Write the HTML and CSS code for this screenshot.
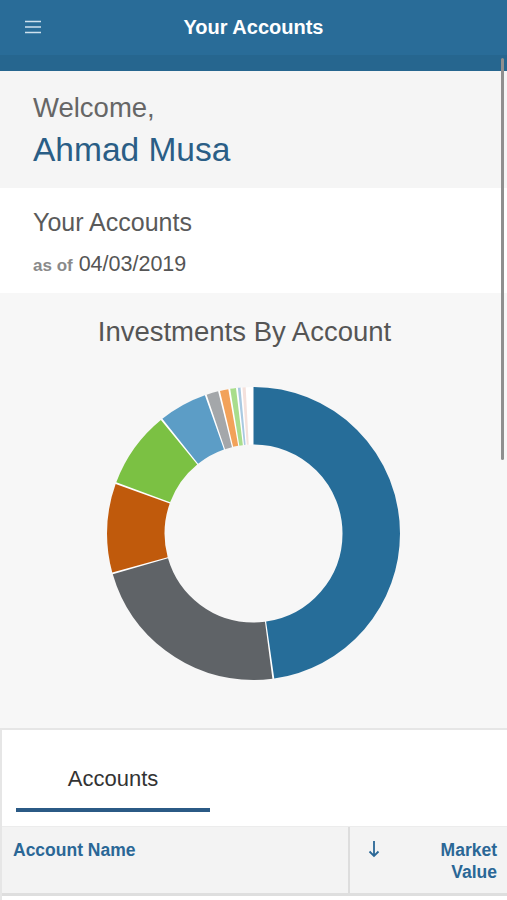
FILE: index.html
```html
<!DOCTYPE html>
<html lang="en">
<head>
    <meta charset="UTF-8">
    <meta name="viewport" content="width=device-width, initial-scale=1.0">
    <title>Your Accounts</title>
    <link rel="stylesheet" href="styles.css">
</head>
<body>
    <header class="topbar">
        <button class="menu-btn" aria-label="Menu">
            <svg width="18" height="16" viewBox="0 0 18 16">
                <path d="M1 2.5h16M1 8h16M1 13.5h16" stroke="#cfe1ee" stroke-width="1.6" fill="none"/>
            </svg>
        </button>
        <h1 class="topbar-title">Your Accounts</h1>
    </header>
    <div class="subbar"></div>

    <section class="welcome">
        <div class="welcome-label">Welcome,</div>
        <div class="welcome-name">Ahmad Musa</div>
    </section>

    <section class="summary">
        <div class="summary-title">Your Accounts</div>
        <div class="summary-date"><span class="as-of">as of</span> 04/03/2019</div>
    </section>

    <section class="chart">
        <h2 class="chart-title">Investments By Account</h2>
        <svg class="donut" width="293" height="293" viewBox="0 0 293 293">
            <g transform="rotate(-90 146.5 146.5)" fill="none" stroke-width="57.5">
                <circle cx="146.5" cy="146.5" r="117.75" stroke="#ffffff"/>
                <circle cx="146.5" cy="146.5" r="117.75" stroke="#266d99" stroke-dasharray="353 740" stroke-dashoffset="0"/>
                <circle cx="146.5" cy="146.5" r="117.75" stroke="#5f6367" stroke-dasharray="167 740" stroke-dashoffset="-354.5"/>
                <circle cx="146.5" cy="146.5" r="117.75" stroke="#c05a0c" stroke-dasharray="72.3 740" stroke-dashoffset="-523"/>
                <circle cx="146.5" cy="146.5" r="117.75" stroke="#7bc143" stroke-dasharray="62.2 740" stroke-dashoffset="-596.8"/>
                <circle cx="146.5" cy="146.5" r="117.75" stroke="#5c9dc6" stroke-dasharray="39.2 740" stroke-dashoffset="-660.5"/>
                <circle cx="146.5" cy="146.5" r="117.75" stroke="#a4a7aa" stroke-dasharray="9.6 740" stroke-dashoffset="-701.2"/>
                <circle cx="146.5" cy="146.5" r="117.75" stroke="#f2a25a" stroke-dasharray="6.9 740" stroke-dashoffset="-712.3"/>
                <circle cx="146.5" cy="146.5" r="117.75" stroke="#a9dd8c" stroke-dasharray="4.7 740" stroke-dashoffset="-720.7"/>
                <circle cx="146.5" cy="146.5" r="117.75" stroke="#a9c9e1" stroke-dasharray="2.2 740" stroke-dashoffset="-726.9"/>
                <circle cx="146.5" cy="146.5" r="117.75" stroke="#f4e1dc" stroke-dasharray="2.6 740" stroke-dashoffset="-730.6"/>
            </g>
        </svg>
    </section>

    <section class="accounts-card">
        <div class="tabs">
            <div class="tab tab-active">Accounts</div>
        </div>
        <div class="table-head">
            <div class="th th-name">Account Name</div>
            <div class="th th-value">
                <svg class="sort-icon" width="12" height="18" viewBox="0 0 12 18">
                    <path d="M6 1v15M1.5 11.5L6 16l4.5-4.5" stroke="#2a6796" stroke-width="1.8" fill="none"/>
                </svg>
                <span class="th-value-text">Market<br>Value</span>
            </div>
        </div>
        <div class="table-body"></div>
    </section>

    <div class="scroll-thumb"></div>
</body>
</html>
```

FILE: styles.css
```css
body {
    margin: 0;
    font-family: "Liberation Sans", Arial, sans-serif;
    background-color: #ffffff;
    color: #333;
    overflow: hidden;
}
.topbar {
    height: 55px;
    background-color: #296c98;
    display: flex;
    align-items: center;
    justify-content: center;
    position: relative;
}
.menu-btn {
    position: absolute;
    left: 24px;
    top: 19px;
    background: none;
    border: 0;
    padding: 0;
    line-height: 0;
}
.topbar-title {
    margin: 0;
    color: #ffffff;
    font-size: 20px;
    font-weight: bold;
}
.subbar {
    height: 16px;
    background-color: #26668f;
}
.welcome {
    background-color: #f5f5f5;
    padding: 20px 33px 19px;
}
.welcome-label {
    font-size: 27.5px;
    line-height: 34px;
    color: #666;
}
.welcome-name {
    font-size: 33.5px;
    line-height: 38px;
    margin-top: 6px;
    color: #2a5e86;
}
.summary {
    background-color: #ffffff;
    padding: 19px 33px 15px;
}
.summary-title {
    font-size: 25px;
    line-height: 30px;
    color: #5a5a5a;
}
.summary-date {
    margin-top: 13px;
    height: 28px;
    font-size: 21.5px;
    line-height: 28px;
    color: #555;
}
.as-of {
    font-size: 17px;
    line-height: 20px;
    font-weight: bold;
    color: #8a8a8a;
}
.chart {
    background-color: #f7f7f7;
    padding: 22px 0 48px;
    border-bottom: 2px solid #e6e6e6;
    text-align: center;
}
.chart-title {
    margin: 0;
    padding-right: 18px;
    font-size: 27.5px;
    line-height: 34px;
    font-weight: normal;
    color: #555;
}
.donut {
    display: block;
    margin: 38px auto 0;
}
.accounts-card {
    border-left: 2px solid #e6e6e6;
    background-color: #ffffff;
}
.tabs {
    padding: 35px 0 0 14px;
    border-bottom: 1px solid #ececec;
}
.tab {
    width: 194px;
    text-align: center;
    font-size: 22px;
    line-height: 28px;
    color: #333;
    padding-bottom: 15px;
}
.tab-active {
    border-bottom: 4px solid #2b5a85;
    margin-bottom: 14px;
}
.table-head {
    display: flex;
    background-color: #f3f3f3;
    border-bottom: 3px solid #dedede;
    height: 66px;
}
.th {
    font-size: 17.5px;
    font-weight: bold;
    line-height: 22px;
    color: #2a6796;
    padding-top: 12px;
}
.th-name {
    width: 335px;
    padding-left: 11px;
}
.th-value {
    flex: 1;
    display: flex;
    justify-content: space-between;
    border-left: 2px solid #dddddd;
    padding-left: 18px;
    padding-right: 10px;
}
.sort-icon {
    margin-top: 1px;
}
.th-value-text {
    text-align: right;
}
.table-body {
    height: 40px;
}
.scroll-thumb {
    position: absolute;
    left: 501px;
    top: 58px;
    width: 3px;
    height: 402px;
    border-radius: 2px;
    background-color: #8f8f8f;
}
```
